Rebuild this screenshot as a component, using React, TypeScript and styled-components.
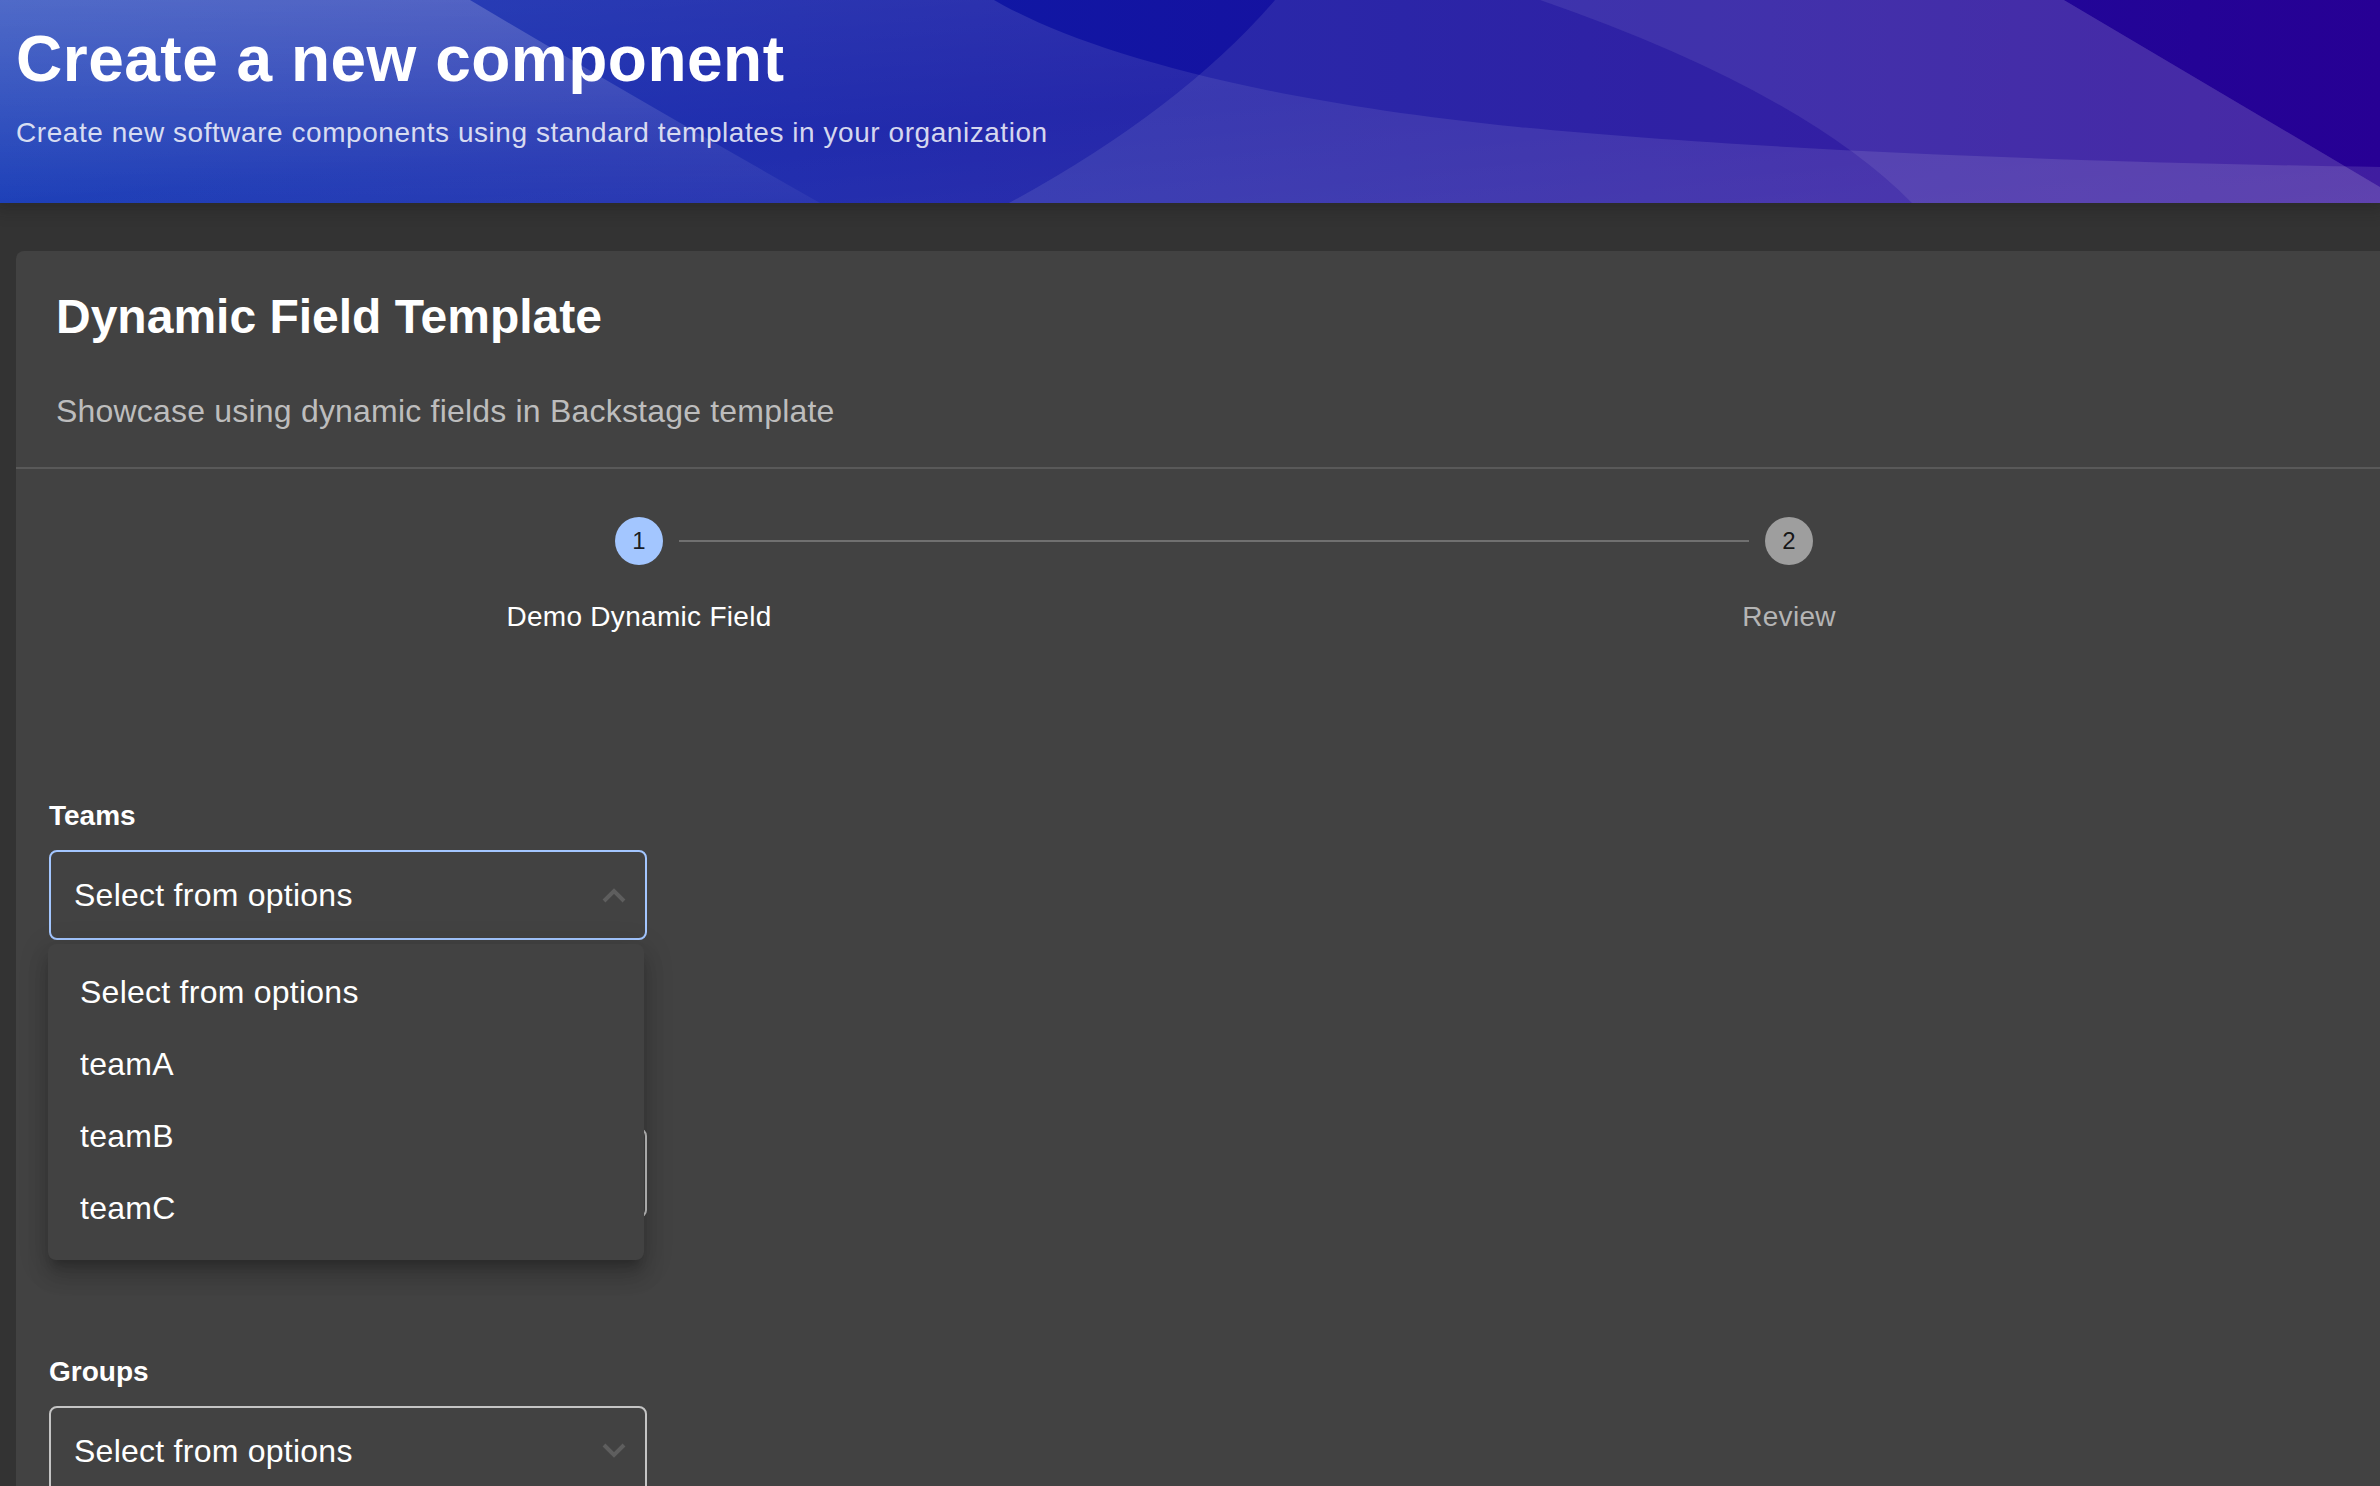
import React from "react";
import styled, { createGlobalStyle } from "styled-components";

const GlobalStyle = createGlobalStyle`
  html, body {
    margin: 0;
    padding: 0;
    background: #333333;
  }
  body {
    font-family: "Liberation Sans", Helvetica, Arial, sans-serif;
    overflow: hidden;
  }
  * {
    box-sizing: border-box;
  }
`;

const Page = styled.div`
  width: 2380px;
  height: 1486px;
  overflow: hidden;
  background: #333333;
  display: flex;
  flex-direction: column;
`;

const Header = styled.header`
  position: relative;
  z-index: 1;
  flex-shrink: 0;
  height: 203px;
  padding: 23px 16px 0;
  color: #ffffff;
  overflow: hidden;
  background: linear-gradient(90deg, #0027af, #270094);
  box-shadow: 0 0 16px 6px rgba(20, 20, 20, 0.3);
`;

const ArtSvg = styled.svg`
  position: absolute;
  inset: 0;
  width: 100%;
  height: 100%;
`;

const HeaderText = styled.div`
  position: relative;
`;

const HeaderTitle = styled.h1`
  margin: 0;
  font-size: 64px;
  line-height: 72px;
  font-weight: 700;
  letter-spacing: 0.5px;
`;

const HeaderSubtitle = styled.p`
  margin: 18px 0 0;
  font-size: 28px;
  line-height: 40px;
  letter-spacing: 0.55px;
  color: rgba(255, 255, 255, 0.82);
`;

const Card = styled.main`
  flex: 1;
  margin: 48px 0 0 16px;
  background: #424242;
  border-radius: 8px 0 0 0;
  color: #ffffff;
`;

const CardHeader = styled.section`
  padding: 38px 40px 32px;
  border-bottom: 2px solid #595959;
`;

const CardTitle = styled.h2`
  margin: 0;
  font-size: 48px;
  line-height: 56px;
  font-weight: 700;
`;

const CardDescription = styled.p`
  margin: 42px 0 0;
  font-size: 32px;
  line-height: 48px;
  letter-spacing: 0.2px;
  color: #bdbdbd;
`;

const Stepper = styled.div`
  padding: 48px 16px 48px 48px;
`;

const StepTrack = styled.div`
  display: flex;
  align-items: center;
  gap: 16px;
  padding: 0 551px;
`;

const StepIcon = styled.div<{ $bg: string }>`
  width: 48px;
  height: 48px;
  flex-shrink: 0;
  border-radius: 50%;
  background: ${(p) => p.$bg};
  display: flex;
  align-items: center;
  justify-content: center;
  font-size: 24px;
  color: rgba(0, 0, 0, 0.87);
`;

const Connector = styled.div`
  flex: 1;
  height: 2px;
  background: #707070;
`;

const StepLabels = styled.div`
  display: grid;
  grid-template-columns: 1fr 1fr;
  margin-top: 32px;
`;

const StepLabel = styled.div<{ $active?: boolean }>`
  text-align: center;
  font-size: 28px;
  line-height: 40px;
  letter-spacing: 0.3px;
  color: ${(p) => (p.$active ? "#ffffff" : "#b5b5b5")};
`;

const Form = styled.form`
  display: flex;
  flex-direction: column;
  padding: 113px 32px 0 33px;
`;

const Field = styled.div`
  position: relative;
  width: 598px;
  margin-bottom: 136px;
`;

const FieldLabel = styled.label`
  display: block;
  margin-bottom: 16px;
  font-size: 28px;
  line-height: 36px;
  font-weight: 700;
  color: #ffffff;
`;

const SelectBox = styled.div<{ $focused?: boolean }>`
  height: 90px;
  display: flex;
  align-items: center;
  justify-content: space-between;
  padding: 0 19px 0 23px;
  border: 2px solid ${(p) => (p.$focused ? "#a3c6ff" : "#c4c4c4")};
  border-radius: 8px;
  font-size: 32px;
  letter-spacing: 0.25px;
  color: #ffffff;
`;

const Menu = styled.ul`
  position: absolute;
  z-index: 2;
  top: 146px;
  left: -1px;
  width: 596px;
  margin: 0;
  padding: 12px 0 16px;
  list-style: none;
  background: #424242;
  border-radius: 8px;
  box-shadow: 0 10px 10px -6px rgba(0, 0, 0, 0.2),
    0 16px 20px 2px rgba(0, 0, 0, 0.14), 0 6px 28px 4px rgba(0, 0, 0, 0.12);
`;

const MenuItem = styled.li`
  height: 72px;
  display: flex;
  align-items: center;
  padding: 0 32px;
  font-size: 32px;
  letter-spacing: 0.25px;
  color: #ffffff;
`;

const Chevron = ({ up }: { up?: boolean }) => (
  <svg width="24" height="16" viewBox="0 0 24 16">
    <polyline
      points={up ? "2,14 12,4 22,14" : "2,2 12,12 22,2"}
      fill="none"
      stroke="#5e5e5e"
      strokeWidth="4"
    />
  </svg>
);

const HeaderArt = () => (
  <ArtSvg viewBox="0 0 2380 203" preserveAspectRatio="none">
    <defs>
      <linearGradient id="leftGlow" x1="0" y1="0" x2="0" y2="1">
        <stop offset="0" stopColor="#fff" stopOpacity="0.2" />
        <stop offset="1" stopColor="#fff" stopOpacity="0.04" />
      </linearGradient>
      <linearGradient id="wave" x1="0" y1="0" x2="1" y2="1">
        <stop offset="0" stopColor="#fff" stopOpacity="0.14" />
        <stop offset="0.5" stopColor="#fff" stopOpacity="0.08" />
        <stop offset="1" stopColor="#fff" stopOpacity="0.12" />
      </linearGradient>
    </defs>
    <path
      d="M0 0 H994 C1080 50 1250 100 1518 127 C1750 150 2100 163 2380 167 V203 H0 Z"
      fill="url(#wave)"
    />
    <path d="M0 0 H470 Q630 95 820 203 H0 Z" fill="url(#leftGlow)" />
    <path
      d="M1275 0 Q1180 110 1009 203 H2380 V187 L2064 0 Z"
      fill="#fff"
      fillOpacity="0.09"
    />
    <path
      d="M1540 0 Q1800 90 1912 203 H2380 V187 L2064 0 Z"
      fill="#fff"
      fillOpacity="0.08"
    />
  </ArtSvg>
);

const teamOptions = ["Select from options", "teamA", "teamB", "teamC"];

export default function App() {
  return (
    <>
      <GlobalStyle />
      <Page>
        <Header>
          <HeaderArt />
          <HeaderText>
            <HeaderTitle>Create a new component</HeaderTitle>
            <HeaderSubtitle>
              Create new software components using standard templates in your
              organization
            </HeaderSubtitle>
          </HeaderText>
        </Header>

        <Card>
          <CardHeader>
            <CardTitle>Dynamic Field Template</CardTitle>
            <CardDescription>
              Showcase using dynamic fields in Backstage template
            </CardDescription>
          </CardHeader>

          <Stepper>
            <StepTrack>
              <StepIcon $bg="#a3c6ff">1</StepIcon>
              <Connector />
              <StepIcon $bg="#9e9e9e">2</StepIcon>
            </StepTrack>
            <StepLabels>
              <StepLabel $active>Demo Dynamic Field</StepLabel>
              <StepLabel>Review</StepLabel>
            </StepLabels>
          </Stepper>

          <Form>
            <Field>
              <FieldLabel>Teams</FieldLabel>
              <SelectBox $focused>
                <span>Select from options</span>
                <Chevron up />
              </SelectBox>
              <Menu>
                {teamOptions.map((o) => (
                  <MenuItem key={o}>{o}</MenuItem>
                ))}
              </Menu>
            </Field>

            <Field>
              <FieldLabel>Members</FieldLabel>
              <SelectBox>
                <span>Select from options</span>
                <Chevron />
              </SelectBox>
            </Field>

            <Field>
              <FieldLabel>Groups</FieldLabel>
              <SelectBox>
                <span>Select from options</span>
                <Chevron />
              </SelectBox>
            </Field>
          </Form>
        </Card>
      </Page>
    </>
  );
}
